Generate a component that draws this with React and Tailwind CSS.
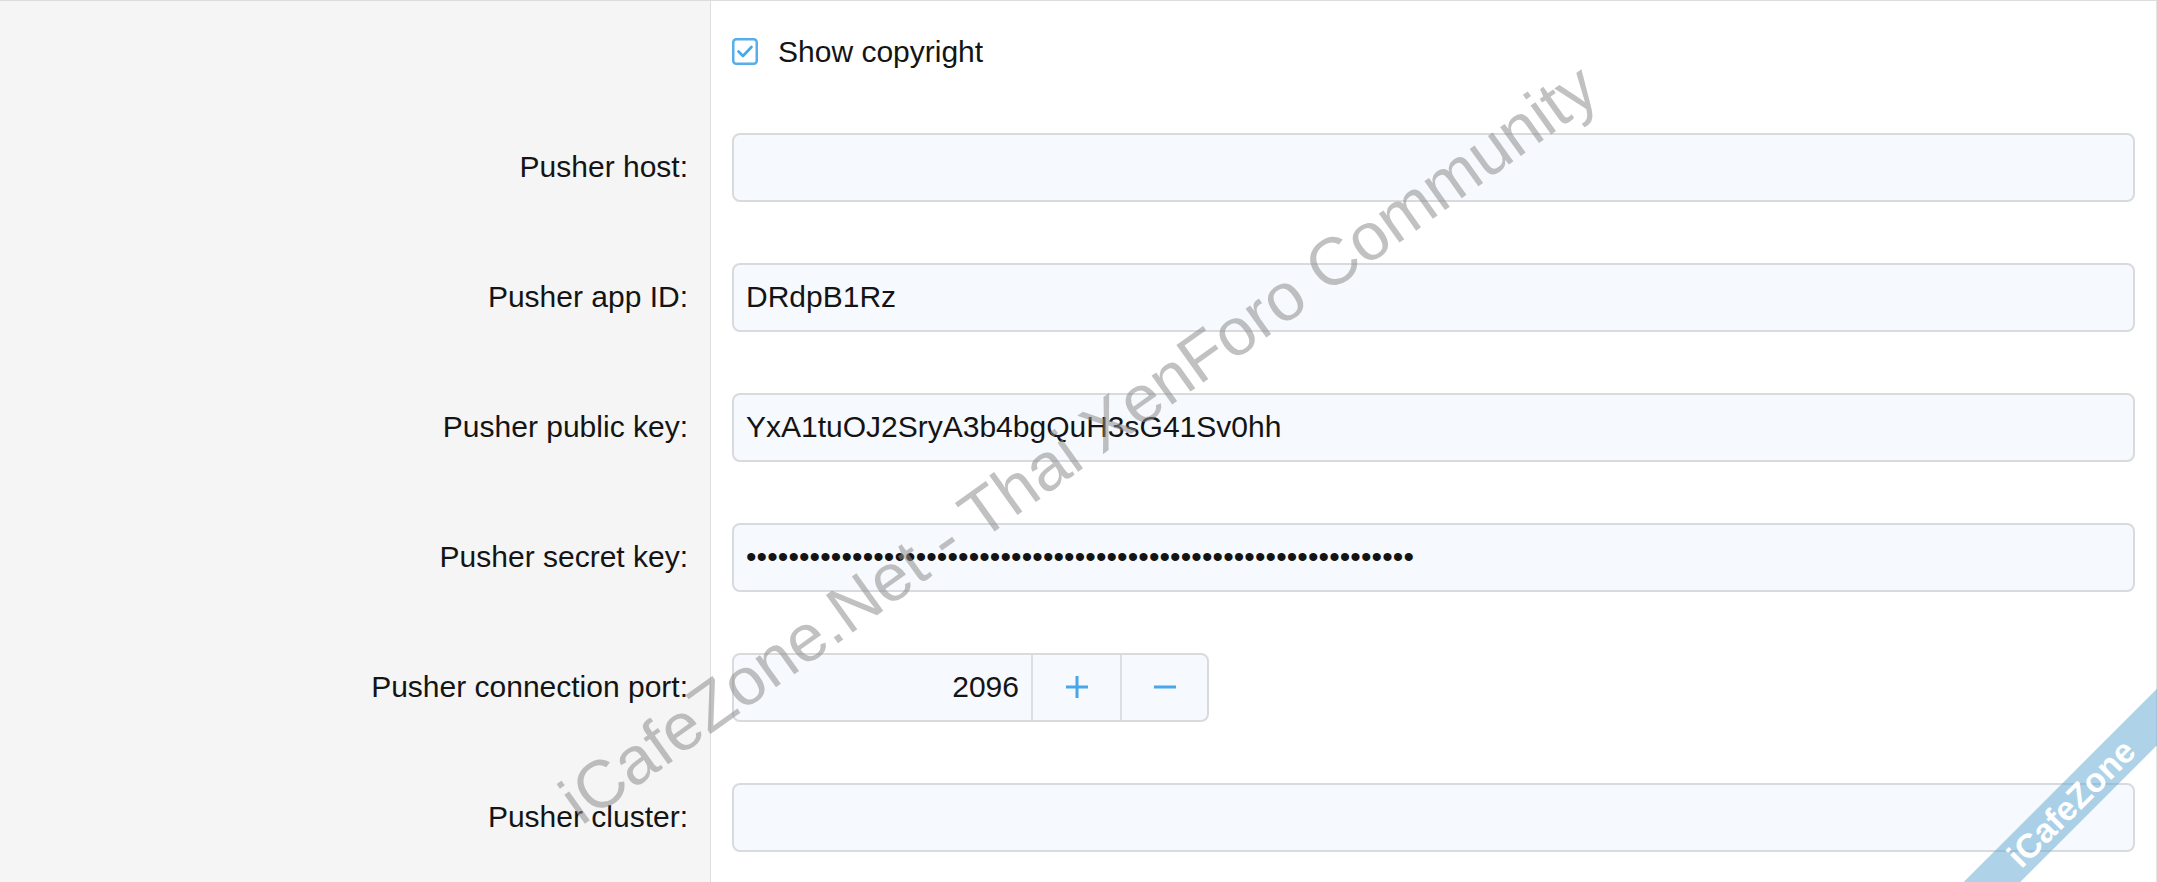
import React from 'react'

function Label({children}) {
    return (
        <div className="w-[711px] shrink-0 self-stretch flex items-center justify-end pr-[22px] bg-[#f5f5f5] border-r border-[#dedede]">
            {children}
        </div>
    )
}

function TextBox({value, mono}) {
    return (
        <div className="h-[69px] w-full flex items-center px-[12px] bg-[#f6f9fd] border-2 border-[#d8dadd] rounded-[8px] whitespace-nowrap overflow-hidden">
            <span className={mono ? 'tracking-[0.1px]' : ''}>{value}</span>
        </div>
    )
}

function Row({label, children}) {
    return (
        <div className="flex h-[130px]">
            <Label>{label}</Label>
            <div className="flex-1 flex items-center pl-[21px] pr-[21px]">
                {children}
            </div>
        </div>
    )
}

function PortField() {
    return (
        <div className="flex h-[69px] w-[477px] bg-[#f6f9fd] border-2 border-[#d8dadd] rounded-[8px] overflow-hidden">
            <div className="w-[299px] flex items-center justify-end pr-[12px] border-r-2 border-[#dcdee0]">
                2096
            </div>
            <div className="w-[89px] flex items-center justify-center border-r-2 border-[#dcdee0]">
                <svg width="26" height="26" viewBox="0 0 26 26">
                    <path d="M13 2v22M2 13h22" stroke="#47a7eb" strokeWidth="3" fill="none" />
                </svg>
            </div>
            <div className="flex-1 flex items-center justify-center">
                <svg width="24" height="26" viewBox="0 0 24 26">
                    <path d="M1 13h22" stroke="#47a7eb" strokeWidth="3" fill="none" />
                </svg>
            </div>
        </div>
    )
}

export default function App() {
    const dots = '•'.repeat(63)
    return (
        <div className="relative w-full h-[882px] overflow-hidden bg-white border-t border-[#dcdcdc] font-['Liberation_Sans',Arial,sans-serif] text-[30px] leading-none text-[#141414]">
            <div className="flex flex-col h-full">
                <div className="flex h-[102px]">
                    <Label />
                    <div className="flex-1 flex items-center gap-[20px] pl-[21px] border-r border-[#e3e3e3]">
                        <svg width="26" height="27" viewBox="0 0 26 27">
                            <rect x="1.25" y="1.25" width="23.5" height="24.5" rx="3" fill="#fff" stroke="#56aeea" strokeWidth="2.5" />
                            <path d="M6.5 13.5l4.5 4.5 8.5-9" stroke="#47a7eb" strokeWidth="2.6" fill="none" strokeLinecap="round" strokeLinejoin="round" />
                        </svg>
                        <span>Show copyright</span>
                    </div>
                </div>
                <div className="border-r border-[#e3e3e3] flex-1 flex flex-col">
                    <Row label="Pusher host:"><TextBox value="" /></Row>
                    <Row label="Pusher app ID:"><TextBox value="DRdpB1Rz" /></Row>
                    <Row label="Pusher public key:"><TextBox value="YxA1tuOJ2SryA3b4bgQuH3sG41Sv0hh" /></Row>
                    <Row label="Pusher secret key:"><TextBox value={dots} mono /></Row>
                    <Row label="Pusher connection port:"><PortField /></Row>
                    <Row label="Pusher cluster:"><TextBox value="" /></Row>
                    <div className="flex flex-1">
                        <Label />
                        <div className="flex-1" />
                    </div>
                </div>
            </div>

            {/* watermark */}
            <div className="absolute left-[1078px] top-[442px] -translate-x-1/2 -translate-y-1/2 rotate-[-35.5deg] whitespace-nowrap text-[67px] text-[#8f8f8f] opacity-55 pointer-events-none">
                iCafeZone.Net - Thai XenForo Community
            </div>

            <div className="absolute left-[2071px] top-[802px] -translate-x-1/2 -translate-y-1/2 -rotate-45 w-[440px] h-[40px] bg-[#5ea8d2]/50 flex items-center justify-center text-white font-bold text-[34px] pointer-events-none">
                iCafeZone
            </div>
        </div>
    )
}
